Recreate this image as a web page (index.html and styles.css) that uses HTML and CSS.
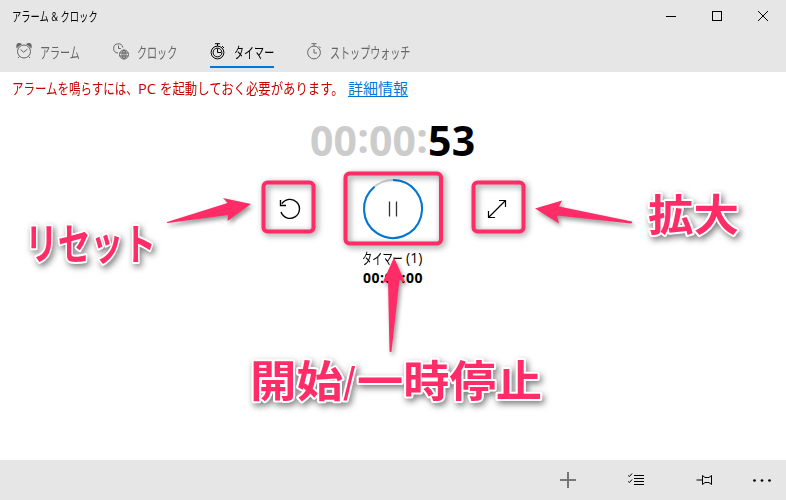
FILE: index.html
```html
<!DOCTYPE html>
<html lang="ja">
<head>
<meta charset="utf-8">
<title>アラーム &amp; クロック</title>
<link rel="stylesheet" href="styles.css">
</head>
<body>
<div class="window">
  <header class="chrome">
    <div class="titlebar">
      <span class="title"><span class="squeeze">アラーム &amp; クロック</span></span>
      <div class="controls">
        <svg width="46" height="32" shape-rendering="crispEdges"><path d="M18 16.500h10"/></svg>
        <svg width="46" height="32" shape-rendering="crispEdges"><path d="M18.500 11.500h9v9h-9z"/></svg>
        <svg width="46" height="32"><path d="M18 11l10 10M28 11l-10 10"/></svg>
      </div>
    </div>
    <nav class="tabs">
      <div class="tab alarm">
        <svg width="16" height="16" viewBox="0 0 16 16"><circle cx="8" cy="8.500" r="6.500"/><path d="M4.500 6.500l3 2.700 4-3M3.500 13.500L2 15M12.500 13.500l1.500 1.500"/><path class="solid" d="M.5 5.500Q-.5 0 3 0q2 0 3 1.200Q3 2.500 .5 5.500zM15.500 5.500Q16.500 0 13 0q-2 0-3 1.200 3 1.300 5.500 4.300z"/></svg>
        <span class="label"><span class="squeeze">アラーム</span></span>
      </div>
      <div class="tab clock">
        <svg width="16" height="17" viewBox="0 0 16 17"><path d="M5 10A4.600 4.600 0 1 1 9.800 4.500M5.500 2.500v3h2.300"/><circle cx="11" cy="11.500" r="4.500"/><ellipse cx="11" cy="11.500" rx="2" ry="4.500"/><path d="M6.700 10h8.600M6.700 13h8.600M11 7v9"/></svg>
        <span class="label"><span class="squeeze">クロック</span></span>
      </div>
      <div class="tab timer active">
        <svg width="16" height="17" viewBox="0 0 16 17"><circle cx="7.500" cy="9.500" r="6.400"/><circle cx="7.500" cy="9.500" r="4.400"/><path d="M5 .7h5M7.500 .7v2.500M12 3l2 2M7.500 5.500v4h3.500"/></svg>
        <span class="label"><span class="squeeze">タイマー</span></span>
      </div>
      <div class="tab stopwatch">
        <svg width="15" height="17" viewBox="0 0 15 17"><circle cx="7" cy="9.500" r="6.400"/><path d="M4.500 .7h5M7 .7v2.500M11.800 3.300l1.700 1.700M7 6v4h3"/></svg>
        <span class="label"><span class="squeeze">ストップウォッチ</span></span>
      </div>
    </nav>
  </header>

  <main>
    <p class="notice">
      <span class="part first"><span class="squeeze">アラームを鳴らすには、</span></span><span class="part pc">PC</span><span class="part rest"><span class="squeeze">を起動しておく必要があります。</span></span><a class="part more">詳細情報</a>
    </p>
    <div class="count"><span class="dim">00<i>:</i>00<i>:</i></span>53</div>
    <div class="actions">
      <svg class="reset" width="22" height="22" viewBox="0 0 22 22"><path d="M2 14A9.500 9.500 0 1 0 3 5.700M1.500 2v5.500H7"/></svg>
      <svg class="dial" width="60" height="60" viewBox="0 0 60 60"><circle class="track" cx="30" cy="30" r="29"/><path class="progress" d="M30 1A29 29 0 1 1 11.500 7.700"/><path class="pause" d="M26.500 22.500v15M33.500 22.500v15"/></svg>
      <svg class="expand" width="20" height="20" viewBox="0 0 20 20"><path d="M1.500 18.500l17-17M12 1.500h6.500V8M1.500 12v6.500H8"/></svg>
    </div>
    <div class="name"><span class="namekana"><span class="squeeze">タイマー</span></span>(1)</div>
    <div class="total">00:01:00</div>
  </main>

  <footer class="commands">
    <svg class="add" width="16" height="16" shape-rendering="crispEdges"><path d="M0 8h16M8 0v16"/></svg>
    <svg class="list" width="17" height="14" viewBox="0 0 17 14"><path d="M6 2.500h10M6 5.500h10M6 8.500h10M6 11.500h10M.2 2.500l1.300 1 2.500-3M.2 8.500l1.300 1 2.500-3"/></svg>
    <svg class="pin" width="17" height="12" viewBox="0 0 17 12"><path d="M.5 6h6M6.500 1.500v9l2.500-2h4l2.500 2v-9l-2.500 2H9l-2.500-2"/></svg>
    <svg class="dots" width="20" height="4"><circle cx="2.500" cy="2.500" r="1.350"/><circle cx="10" cy="2.500" r="1.350"/><circle cx="17.500" cy="2.500" r="1.350"/></svg>
  </footer>

  <svg class="callouts" width="786" height="500" viewBox="0 0 786 500">
    <g class="frames">
      <rect x="263.500" y="182.500" width="50" height="49" rx="4"/>
      <rect x="345.500" y="173.500" width="95.500" height="70" rx="4"/>
      <rect x="473.500" y="182.500" width="50" height="49" rx="4"/>
    </g>
    <g class="arrows">
      <path d="M251 204L223 198l4.500 5L167 222q-1 1 1 1l60-8-.5 6z"/>
      <path d="M535 208.500L562 200.500l-3 6 73 15q1 1.500-1 2l-74-8 2 8z"/>
      <path d="M394 257.500L382 284l6-3.500 1.500 71q1.500 1 2 0l8-72 6 4z"/>
    </g>
    <g class="words">
      <text x="25" y="260" font-size="43" textLength="131" lengthAdjust="spacingAndGlyphs">リセット</text>
      <text x="648" y="231" font-size="43" textLength="91" lengthAdjust="spacingAndGlyphs">拡大</text>
      <text x="250" y="397" font-size="43" textLength="93" lengthAdjust="spacingAndGlyphs">開始</text>
      <text x="343" y="394" font-size="35" textLength="13" lengthAdjust="spacingAndGlyphs">/</text>
      <text x="357" y="397" font-size="43" textLength="185" lengthAdjust="spacingAndGlyphs">一時停止</text>
    </g>
  </svg>
</div>
</body>
</html>
```

FILE: styles.css
```css
* { box-sizing: border-box; }
body {
  margin: 0;
  background: #fff;
  color: #000;
  font-family: "Open Sans", "Noto Sans CJK JP", sans-serif;
}
svg {
  display: block;
  flex: none;
  overflow: visible;
  fill: none;
  stroke: currentColor;
  stroke-width: 1;
}
.window {
  position: relative;
  width: 786px;
  height: 500px;
  display: flex;
  flex-direction: column;
  overflow: hidden;
}
.squeeze {
  display: inline-block;
  transform-origin: 0 50%;
  white-space: nowrap;
}
.chrome { height: 72px; background: #e6e6e6; }
.titlebar {
  display: flex;
  justify-content: space-between;
  height: 32px;
  padding-left: 12px;
}
.title { width: 90px; font-size: 13px; line-height: 33px; }
.title .squeeze { transform: scaleX(.715); }
.controls { display: flex; }
.tabs { display: flex; height: 36px; padding-left: 16px; }
.tab {
  display: flex;
  align-items: center;
  gap: 8px;
  height: 36px;
  color: #666;
  font-size: 15px;
}
.tab svg { margin-top: 2px; }
.label { width: 42px; white-space: nowrap; line-height: 36px; padding-top: 4px; }
.label .squeeze { transform: scaleX(.67); }
.alarm { width: 97px; }
.clock { width: 97px; }
.timer { width: 64px; }
.active { color: #000; border-bottom: 2px solid #0078d7; }
.active svg { margin-top: 4px; }
.active .label { padding-top: 6px; }
.stopwatch { margin-left: 33px; }
main { flex: 1; display: flex; flex-direction: column; }
.notice {
  display: flex;
  height: 34px;
  margin: 0;
  padding-left: 12px;
  color: #c50500;
  font-size: 15px;
  line-height: 33px;
  white-space: nowrap;
}
.first { width: 126px; }
.first .squeeze { transform: scaleX(.765); }
.pc { width: 22px; font-size: 14.5px; }
.rest { width: 188px; }
.rest .squeeze { transform: scaleX(.825); }
.more {
  color: #0078d7;
  font-size: 15px;
  text-decoration: underline;
  text-underline-offset: 2px;
}
.count {
  height: 60px;
  margin-top: 4px;
  padding-left: 310px;
  font-size: 41px;
  font-weight: 700;
  line-height: 60px;
  letter-spacing: .15px;
}
.count i { font-style: normal; position: relative; top: -3px; }
.dim { color: #ccc; }
.actions {
  display: flex;
  align-items: center;
  height: 60px;
  margin-top: 9px;
  padding-left: 279px;
}
.reset { stroke-width: 1.4; }
.dial { margin-left: 62px; }
.expand { margin-left: 64px; stroke-width: 1.2; }
.track { stroke: #ccc; stroke-width: 2; }
.progress { stroke: #0078d7; stroke-width: 2; }
.pause { stroke: #333; stroke-width: 1.3; }
.name {
  display: flex;
  height: 20px;
  margin-top: 9px;
  padding-left: 362px;
  font-size: 14px;
  line-height: 20px;
}
.namekana { width: 44px; white-space: nowrap; font-size: 15px; }
.namekana .squeeze { transform: scaleX(.68); }
.total {
  padding-left: 363px;
  font-size: 14px;
  font-weight: 700;
  line-height: 20px;
  letter-spacing: .5px;
}
.commands {
  display: flex;
  align-items: center;
  height: 40px;
  padding-left: 560px;
  background: #e6e6e6;
}
.add { stroke: #777; stroke-width: 2; }
.list { margin-left: 52px; }
.pin { margin-left: 51px; }
.dots { fill: #000; stroke: none; margin-left: 39px; }
.solid { fill: currentColor; stroke: none; }
.callouts { position: absolute; left: 0; top: 0; pointer-events: none; }
.frames { stroke: #ff2c68; stroke-width: 4; filter: drop-shadow(2px 2px 3px rgb(0 0 0 / .45)); }
.arrows { fill: #ff2c68; stroke: none; filter: drop-shadow(2px 3px 2px rgb(0 0 0 / .4)); }
.words { filter: drop-shadow(2px 3px 3px rgb(0 0 0 / .5)); }
.words text {
  font-family: "Noto Sans CJK JP", sans-serif;
  font-weight: 700;
  fill: #ff2c68;
  stroke: #fff;
  stroke-width: 4;
  stroke-linejoin: round;
  paint-order: stroke;
}
```
